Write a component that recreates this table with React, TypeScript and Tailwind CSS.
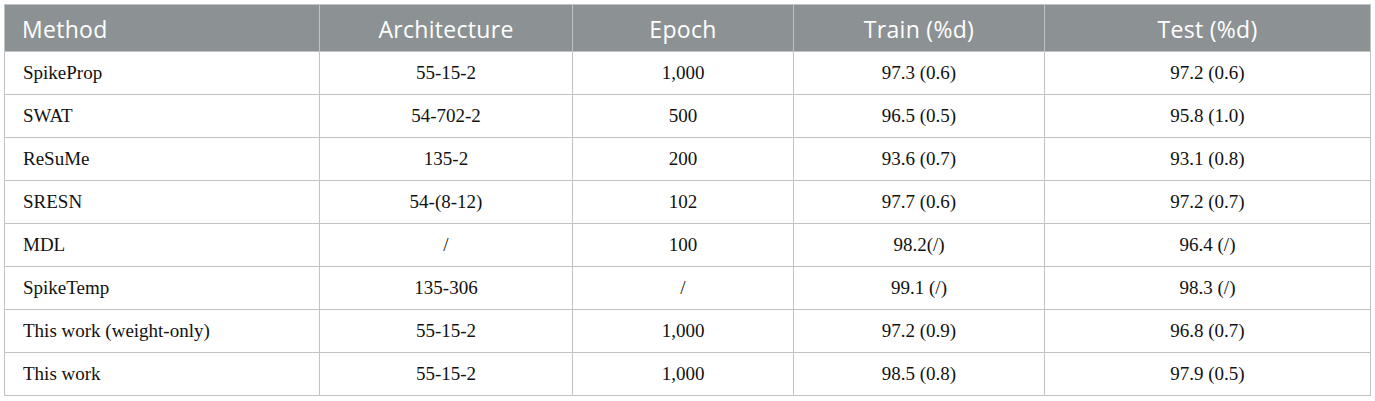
import React from 'react';

interface Row {
  method: string;
  arch: string;
  epoch: string;
  train: string;
  test: string;
}

const rows: Row[] = [
  { method: 'SpikeProp', arch: '55-15-2', epoch: '1,000', train: '97.3 (0.6)', test: '97.2 (0.6)' },
  { method: 'SWAT', arch: '54-702-2', epoch: '500', train: '96.5 (0.5)', test: '95.8 (1.0)' },
  { method: 'ReSuMe', arch: '135-2', epoch: '200', train: '93.6 (0.7)', test: '93.1 (0.8)' },
  { method: 'SRESN', arch: '54-(8-12)', epoch: '102', train: '97.7 (0.6)', test: '97.2 (0.7)' },
  { method: 'MDL', arch: '/', epoch: '100', train: '98.2(/)', test: '96.4 (/)' },
  { method: 'SpikeTemp', arch: '135-306', epoch: '/', train: '99.1 (/)', test: '98.3 (/)' },
  { method: 'This work (weight-only)', arch: '55-15-2', epoch: '1,000', train: '97.2 (0.9)', test: '96.8 (0.7)' },
  { method: 'This work', arch: '55-15-2', epoch: '1,000', train: '98.5 (0.8)', test: '97.9 (0.5)' },
];

const headers = ['Method', 'Architecture', 'Epoch', 'Train (%d)', 'Test (%d)'];

export default function App() {
  return (
    <div className="bg-white w-[1375px] h-[401px] pt-[4px] pl-[4px]">
      <table className="table-fixed border-collapse border border-[#c9cccb] w-[1366px]">
        <colgroup>
          <col className="w-[315px]" />
          <col className="w-[253px]" />
          <col className="w-[221px]" />
          <col className="w-[251px]" />
          <col className="w-[326px]" />
        </colgroup>
        <thead>
          <tr className="bg-[#8c9294] h-[47px]">
            {headers.map((h, i) => (
              <th
                key={h}
                className={`border border-[#c0c3c3] font-['Open_Sans',sans-serif] font-normal text-[23px] tracking-[0.3px] text-white pt-[2px] ${
                  i === 0 ? 'text-left pl-[17px]' : 'text-center'
                }`}
              >
                {h}
              </th>
            ))}
          </tr>
        </thead>
        <tbody className="font-['Liberation_Serif',serif] text-[19px] text-[#111111]">
          {rows.map((r) => (
            <tr key={r.method} className="h-[43px]">
              <td className="border border-[#c0c3c3] text-left pl-[18px]">{r.method}</td>
              <td className="border border-[#c0c3c3] text-center">{r.arch}</td>
              <td className="border border-[#c0c3c3] text-center">{r.epoch}</td>
              <td className="border border-[#c0c3c3] text-center">{r.train}</td>
              <td className="border border-[#c0c3c3] text-center">{r.test}</td>
            </tr>
          ))}
        </tbody>
      </table>
    </div>
  );
}
